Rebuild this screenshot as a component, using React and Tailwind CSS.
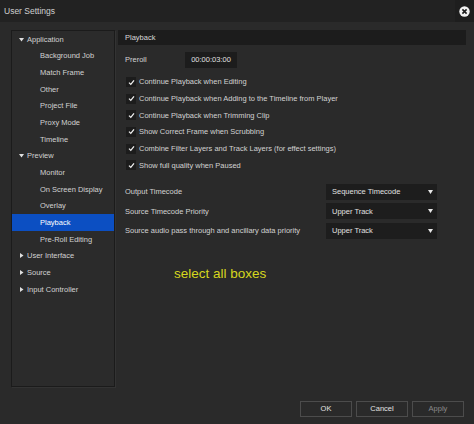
import React from "react";

const tree = [
  { label: "Application", level: 0, open: true },
  { label: "Background Job", level: 1 },
  { label: "Match Frame", level: 1 },
  { label: "Other", level: 1 },
  { label: "Project File", level: 1 },
  { label: "Proxy Mode", level: 1 },
  { label: "Timeline", level: 1 },
  { label: "Preview", level: 0, open: true },
  { label: "Monitor", level: 1 },
  { label: "On Screen Display", level: 1 },
  { label: "Overlay", level: 1 },
  { label: "Playback", level: 1, selected: true },
  { label: "Pre-Roll Editing", level: 1 },
  { label: "User Interface", level: 0 },
  { label: "Source", level: 0 },
  { label: "Input Controller", level: 0 },
];

const checks = [
  "Continue Playback when Editing",
  "Continue Playback when Adding to the Timeline from Player",
  "Continue Playback when Trimming Clip",
  "Show Correct Frame when Scrubbing",
  "Combine Filter Layers and Track Layers (for effect settings)",
  "Show full quality when Paused",
];

const selects = [
  { label: "Output Timecode", value: "Sequence Timecode" },
  { label: "Source Timecode Priority", value: "Upper Track" },
  { label: "Source audio pass through and ancillary data priority", value: "Upper Track" },
];

const Arrow = ({ open }) => (
  <svg width="5" height="5" viewBox="0 0 5 5" className="shrink-0">
    {open ? <polygon points="0,1 5,1 2.5,4.5" fill="#e0e0e0" /> : <polygon points="1,0 4.5,2.5 1,5" fill="#e0e0e0" />}
  </svg>
);

export default function App() {
  return (
    <div className="w-[474px] h-[424px] bg-[#2a2a2a] flex flex-col font-['Liberation_Sans',Arial,sans-serif] text-[7.5px] text-[#d2d2d2] overflow-hidden">
      {/* title bar */}
      <div className="h-[22px] bg-[#222222] flex items-center justify-between pl-[4px]">
        <span className="text-[8.5px] text-[#cfcfcf]">User Settings</span>
        <div className="w-[19px] h-[22px] bg-[#1e1e1e] flex items-center justify-center">
          <svg width="11" height="11" viewBox="0 0 11 11">
            <circle cx="5.5" cy="5.5" r="5.2" fill="#f2f2f2" />
            <path d="M3.4 3.4 L7.6 7.6 M7.6 3.4 L3.4 7.6" stroke="#1e1e1e" strokeWidth="1.6" />
          </svg>
        </div>
      </div>

      <div className="flex pt-[8px] pl-[11px] pr-[8px]">
        {/* sidebar */}
        <div className="w-[104px] h-[357px] border border-[#1b1b1b] bg-[#2b2b2b] shadow-[1px_1px_0_#333]">
          {tree.map((t) => (
            <div
              key={t.label}
              className={`h-[16.67px] flex items-center ${t.selected ? "bg-[#0c4fc2] text-white" : ""} ${t.level === 0 ? "pl-[7px] gap-[3px]" : "pl-[28px]"}`}
            >
              {t.level === 0 && <Arrow open={t.open} />}
              <span>{t.label}</span>
            </div>
          ))}
        </div>

        {/* main panel */}
        <div className="ml-[3px] flex-1 flex flex-col">
          <div className="h-[15px] bg-[#1c1c1c] flex items-center pl-[7px] text-[#d8d8d8]">Playback</div>

          <div className="mt-[7px] h-[16px] flex items-center pl-[7px]">
            <span className="w-[60px]">Preroll</span>
            <div className="w-[52px] h-[16px] bg-[#1c1c1c] flex items-center justify-center text-[#e0e0e0]">00:00:03:00</div>
          </div>

          <div className="mt-[5.7px] flex flex-col">
            {checks.map((c) => (
              <div key={c} className="h-[16.67px] flex items-center pl-[8px] gap-[3px]">
                <div className="w-[10px] h-[10px] bg-[#1c1c1c] flex items-center justify-center">
                  <svg width="7" height="7" viewBox="0 0 7 7">
                    <path d="M1 3.6 L2.8 5.4 L6 1.4" stroke="#f0f0f0" strokeWidth="1.3" fill="none" />
                  </svg>
                </div>
                <span>{c}</span>
              </div>
            ))}
          </div>

          <div className="mt-[10.3px] flex flex-col gap-[3.5px]">
            {selects.map((s) => (
              <div key={s.label} className="h-[16px] flex items-center pl-[7px]">
                <span className="w-[201px]">{s.label}</span>
                <div className="w-[111px] h-[16px] bg-[#1d1d1d] flex items-center justify-between pl-[6px] pr-[4px] text-[#e0e0e0]">
                  <span>{s.value}</span>
                  <svg width="5" height="4" viewBox="0 0 5 4">
                    <polygon points="0,0 5,0 2.5,4" fill="#e8e8e8" />
                  </svg>
                </div>
              </div>
            ))}
          </div>

          <div className="mt-[27px] pl-[56px] text-[13.5px] leading-[16px] text-[#d6d61e]">select all boxes</div>
        </div>
      </div>

      {/* footer */}
      <div className="mt-[14px] flex justify-end gap-[4px] pr-[10px]">
        {["OK", "Cancel", "Apply"].map((b) => (
          <div
            key={b}
            className={`w-[52px] h-[16px] border border-[#4c4c4c] flex items-center justify-center ${b === "Apply" ? "text-[#8a8a8a]" : "text-[#e2e2e2]"}`}
          >
            {b}
          </div>
        ))}
      </div>
    </div>
  );
}
